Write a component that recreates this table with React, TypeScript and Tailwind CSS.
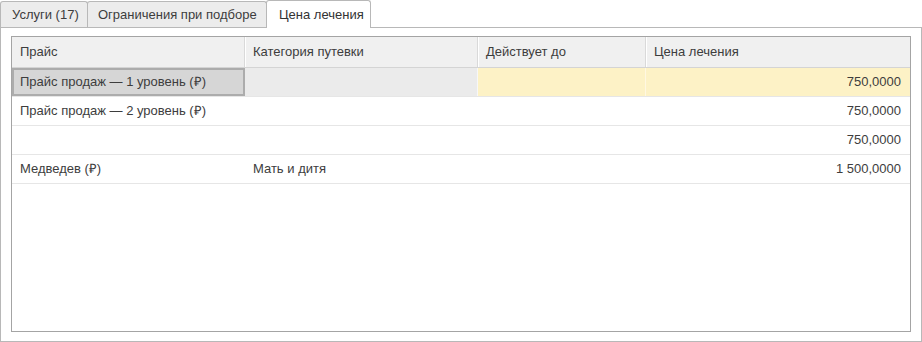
import React from "react";

const font = { fontFamily: '"Liberation Sans", Arial, sans-serif' };

type Row = { c1: string; c2: string; c3: string; c4: string };

const rows: Row[] = [
  { c1: "Прайс продаж — 1 уровень (₽)", c2: "", c3: "", c4: "750,0000" },
  { c1: "Прайс продаж — 2 уровень (₽)", c2: "", c3: "", c4: "750,0000" },
  { c1: "", c2: "", c3: "", c4: "750,0000" },
  { c1: "Медведев (₽)", c2: "Мать и дитя", c3: "", c4: "1 500,0000" },
];

export default function App() {
  return (
    <div className="w-[922px] h-[342px] bg-white text-[13px] text-[#3d3d3d] flex flex-col" style={font}>
      {/* Tabs */}
      <div className="flex items-end h-[27px] relative z-10">
        <div className="h-[26px] w-[88px] flex items-center pl-[11px] bg-[#ececec] border border-b-0 border-[#b8b8b8] rounded-t-[3px]">
          Услуги (17)
        </div>
        <div className="h-[26px] w-[180px] -ml-px flex items-center pl-[10px] bg-[#ececec] border border-b-0 border-[#b8b8b8] rounded-t-[3px]">
          Ограничения при подборе
        </div>
        <div className="h-[28px] w-[105px] -ml-px -mb-px flex items-center pl-[12px] bg-white border border-b-0 border-[#b8b8b8] rounded-t-[3px] text-[#333]">
          Цена лечения
        </div>
      </div>
      {/* Panel */}
      <div className="flex-1 border border-[#b8b8b8] pt-[8px] pl-[10px] pr-[10px] pb-[9px] flex flex-col">
        <div className="flex-1 border border-[#a4a4a4] bg-white flex flex-col">
          {/* Header */}
          <div className="grid grid-cols-[233px_233px_168px_1fr] h-[31px] bg-[#f0f0f0] border-b border-[#d4d4d4]">
            {["Прайс", "Категория путевки", "Действует до", "Цена лечения"].map((h, i) => (
              <div
                key={h}
                className={
                  "flex items-center pl-[8px] " +
                  (i < 3 ? "border-r border-[#d9d9d9] shadow-[1px_0_0_#ffffff]" : "")
                }
              >
                {h}
              </div>
            ))}
          </div>
          {/* Rows */}
          {rows.map((r, idx) => {
            const sel = idx === 0;
            return (
              <div
                key={idx}
                className="grid grid-cols-[233px_233px_168px_1fr] h-[29px] border-b border-[#e6e6e6]"
              >
                <div
                  className={
                    sel
                      ? "flex items-center pl-[6px] bg-[#d6d6d6] border-2 border-[#acacac]"
                      : "flex items-center pl-[8px] border-r border-white"
                  }
                >
                  {r.c1}
                </div>
                <div
                  className={
                    "flex items-center pl-[8px] border-r " +
                    (sel ? "bg-[#ebebeb] border-[#f7f7f7]" : "border-white")
                  }
                >
                  {r.c2}
                </div>
                <div
                  className={
                    "flex items-center pl-[8px] border-r " +
                    (sel ? "bg-[#fdf2c6] border-[#fff8e2]" : "border-white")
                  }
                >
                  {r.c3}
                </div>
                <div
                  className={
                    "flex items-center justify-end pr-[9px] " + (sel ? "bg-[#fdf2c6]" : "")
                  }
                >
                  {r.c4}
                </div>
              </div>
            );
          })}
        </div>
      </div>
    </div>
  );
}
